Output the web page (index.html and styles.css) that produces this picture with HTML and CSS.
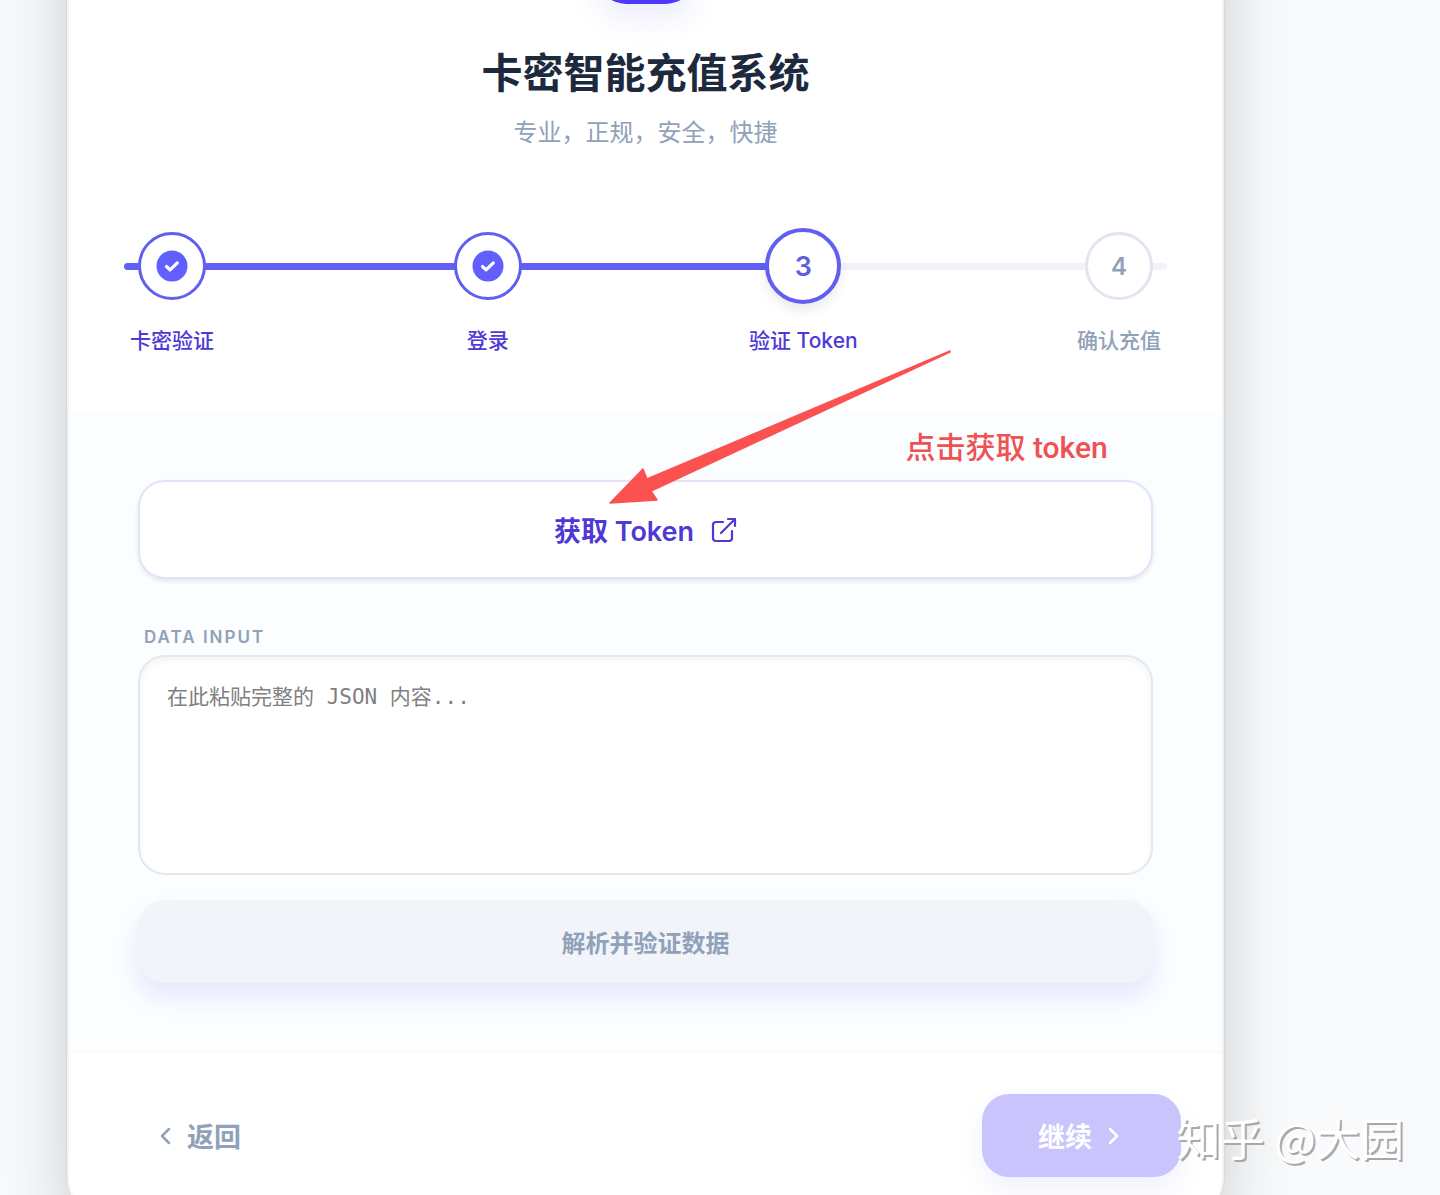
FILE: index.html
```html
<!DOCTYPE html>
<html lang="zh-CN">
<head>
    <meta charset="UTF-8">
    <meta name="viewport" content="width=device-width, initial-scale=1.0">
    <title>卡密智能充值系统</title>
    <link rel="stylesheet" href="styles.css">
</head>
<body>
    <main class="card">
        <header class="header">
            <div class="logo"></div>
            <h1>卡密智能充值系统</h1>
            <p class="subtitle">专业，正规，安全，快捷</p>
            <ol class="steps">
                <li class="step done">
                    <span class="circle">
                        <svg width="32" height="32" viewBox="0 0 32 32">
                            <circle cx="16" cy="16" r="15.5" fill="#615fff"/>
                            <path d="M10.5 16.5l3.6 3.4 7.2-7" fill="none" stroke="#fff" stroke-width="3.2" stroke-linecap="round" stroke-linejoin="round"/>
                        </svg>
                    </span>
                    <span class="step-label">卡密验证</span>
                </li>
                <li class="step done">
                    <span class="circle">
                        <svg width="32" height="32" viewBox="0 0 32 32">
                            <circle cx="16" cy="16" r="15.5" fill="#615fff"/>
                            <path d="M10.5 16.5l3.6 3.4 7.2-7" fill="none" stroke="#fff" stroke-width="3.2" stroke-linecap="round" stroke-linejoin="round"/>
                        </svg>
                    </span>
                    <span class="step-label">登录</span>
                </li>
                <li class="step active">
                    <span class="circle">3</span>
                    <span class="step-label">验证 Token</span>
                </li>
                <li class="step">
                    <span class="circle">4</span>
                    <span class="step-label">确认充值</span>
                </li>
            </ol>
        </header>

        <section class="panel">
            <button class="token-btn" type="button">
                获取 Token
                <svg width="26" height="26" viewBox="0 0 26 26" fill="none" stroke="currentColor" stroke-width="2.2" stroke-linecap="round" stroke-linejoin="round">
                    <path d="M12 5H5a3 3 0 0 0-3 3v13a3 3 0 0 0 3 3h13a3 3 0 0 0 3-3v-7"/>
                    <path d="M17 2h7v7M24 2L10 16"/>
                </svg>
            </button>
            <label class="data-label" for="data">DATA INPUT</label>
            <textarea class="data-input" id="data" placeholder="在此粘贴完整的 JSON 内容..."></textarea>
            <button class="parse-btn" type="button">解析并验证数据</button>

            <svg class="arrow" width="342" height="154" viewBox="0 0 342 154">
                <path d="M341 1L38 129l-4-10L1 153l47-3-6-9L341 2z" fill="#fb5151" stroke="#fb5151" stroke-width="1.5" stroke-linejoin="round"/>
            </svg>
            <p class="note">点击获取 token</p>
        </section>

        <footer class="footer">
            <button class="back-btn" type="button">
                <svg width="12" height="18" viewBox="0 0 12 18" fill="none" stroke="currentColor" stroke-width="2.5" stroke-linecap="round" stroke-linejoin="round">
                    <path d="M9 2L2 9l7 7"/>
                </svg>
                返回
            </button>
            <button class="next-btn" type="button">
                继续
                <svg width="12" height="18" viewBox="0 0 12 18" fill="none" stroke="currentColor" stroke-width="2.5" stroke-linecap="round" stroke-linejoin="round">
                    <path d="M3 2l7 7-7 7"/>
                </svg>
            </button>
        </footer>
    </main>
    <div class="watermark">知乎 @大园</div>
</body>
</html>
```

FILE: styles.css
```css
* {
    box-sizing: border-box;
}
body {
    margin: 0;
    position: relative;
    height: 100vh;
    overflow: hidden;
    background: #f8fafc;
    font-family: Inter, "Noto Sans CJK SC", sans-serif;
    color: #1d293d;
}
button {
    font-family: inherit;
    border: 0;
    cursor: pointer;
    display: flex;
    align-items: center;
    justify-content: center;
}
h1, p, ol {
    margin: 0;
    padding: 0;
}

/* card */
.card {
    margin: -156px 15% 0 67px;
    background: #fff;
    border: 2px solid #f1f2f4;
    border-radius: 42px;
    box-shadow: 0 0 2px rgba(0, 0, 0, 0.16), 0 42px 86px -20px rgba(0, 0, 0, 0.3);
}
.header {
    padding: 62px 55px 56px;
    text-align: center;
}
.logo {
    width: 96px;
    height: 96px;
    margin: 0 auto;
    border-radius: 28px;
    background: #4f39f6;
    box-shadow: 0 16px 28px rgba(79, 87, 246, 0.1);
}
h1 {
    margin-top: 41px;
    font-size: 41px;
    line-height: 56px;
    font-weight: 700;
}
.subtitle {
    margin-top: 12px;
    font-family: "Noto Sans CJK SC", sans-serif;
    font-size: 24px;
    line-height: 36px;
    color: #90a1b9;
}

/* steps */
.steps {
    position: relative;
    display: flex;
    justify-content: space-between;
    margin-top: 83px;
    list-style: none;
}
.steps::before,
.steps::after {
    content: "";
    position: absolute;
    top: 31px;
    left: 0;
    width: 100%;
    height: 7px;
    border-radius: 4px;
    background: #f1f3f9;
}
.steps::after {
    width: 66%;
    background: #615ff5;
}
.step {
    position: relative;
    z-index: 1;
    width: 96px;
    display: flex;
    flex-direction: column;
    align-items: center;
    gap: 26px;
    color: #90a1b9;
}
.circle {
    width: 68px;
    height: 68px;
    display: flex;
    align-items: center;
    justify-content: center;
    border: 3px solid #e2e5f0;
    border-radius: 50%;
    background: #fff;
    font-size: 24px;
    font-weight: 600;
}
.step-label {
    font-family: Inter, "Noto Sans CJK SC", sans-serif;
    font-size: 21px;
    line-height: 30px;
    font-weight: 500;
    white-space: nowrap;
}
.done,
.active {
    color: #4f39d6;
}
.done .circle,
.active .circle {
    border-color: #615fef;
    color: #615fdf;
}
.active .circle {
    width: 76px;
    height: 76px;
    margin: -4px 0;
    border-width: 4px;
    font-size: 27px;
    box-shadow: 0 7px 11px rgba(0, 0, 0, 0.08);
}

/* panel */
.panel {
    position: relative;
    display: flex;
    flex-direction: column;
    padding: 68px 69px;
    background: #fcfdff;
    border-bottom: 2px solid #f8fafc;
}
.token-btn {
    gap: 17px;
    height: 99px;
    border: 2px solid #e0e4fa;
    border-radius: 27px;
    background: #fff;
    box-shadow: 0 2px 4px rgba(30, 30, 90, 0.1);
    color: #4f39d6;
    font-size: 27px;
    font-weight: 600;
}
.data-label {
    margin: 46px 0 6px 6px;
    font-size: 17px;
    line-height: 24px;
    font-weight: 600;
    letter-spacing: 2px;
    color: #90a1b9;
}
.data-input {
    height: 220px;
    padding: 24px 27px;
    border: 2px solid #e2e8f0;
    border-radius: 27px;
    background: #fff;
    box-shadow: inset 0 3px 7px rgba(0, 0, 0, 0.05);
    resize: none;
    outline: 0;
    font-family: "DejaVu Sans Mono", "Noto Sans CJK SC", monospace;
    font-size: 21px;
    line-height: 32px;
}
.data-input::placeholder {
    color: #808080;
}
.parse-btn {
    height: 83px;
    margin-top: 25px;
    border-radius: 27px;
    background: #f1f4f9;
    box-shadow: 0 14px 24px rgba(79, 107, 246, 0.14);
    color: #90a1b9;
    font-size: 24px;
    font-weight: 700;
}

/* hint over the panel */
.arrow {
    position: absolute;
    top: -62px;
    left: calc(50% - 37px);
}
.note {
    position: absolute;
    top: 16px;
    left: calc(50% + 260px);
    font-family: Roboto, "Noto Sans CJK SC", sans-serif;
    font-size: 30px;
    line-height: 40px;
    font-weight: 500;
    color: #ee5252;
}

/* footer */
.footer {
    display: flex;
    justify-content: space-between;
    padding: 41px;
}
.back-btn,
.next-btn {
    gap: 15px;
    height: 83px;
    border-radius: 27px;
    font-size: 27px;
    font-weight: 700;
}
.back-btn {
    padding: 0 50px;
    background: none;
    color: #90a1b9;
}
.next-btn {
    padding: 0 62px 0 56px;
    background: #cac4fd;
    box-shadow: 0 14px 28px rgba(79, 87, 246, 0.08);
    color: #fff;
}

.watermark {
    position: absolute;
    right: 36px;
    bottom: 28px;
    font-family: "Noto Sans CJK SC", sans-serif;
    font-size: 44px;
    line-height: 60px;
    color: #fff;
    text-shadow: 2px 2px 0 #a8a8a8;
}
```
